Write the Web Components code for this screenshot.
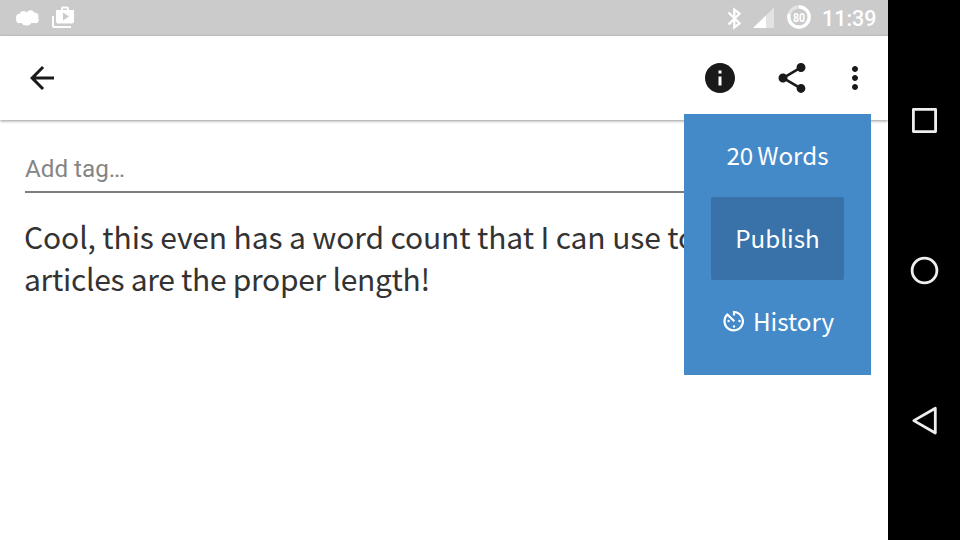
<!DOCTYPE html>
<html lang="en">
<head>
<meta charset="utf-8">
<title>Note editor</title>
<style>
html, body { margin: 0; height: 100%; overflow: hidden; background: #fff; }
</style>
</head>
<body>
<note-app></note-app>
<script>
const define = (name, html) => {
  const template = document.createElement('template');
  template.innerHTML = html;
  customElements.define(name, class extends HTMLElement {
    constructor() {
      super();
      this.attachShadow({ mode: 'open' }).append(template.content.cloneNode(true));
    }
  });
};

define('status-bar', `
<style>
:host { display: flex; align-items: center; box-sizing: border-box; height: 36px; padding: 0 13px 0 14px; background: #cbcbcb; color: #fff; }
svg { display: block; flex: none; }
.spacer { flex: 1; }
.bag { margin-left: 10px; }
.signal { margin-left: 9px; }
.battery { margin-left: 12px; }
.clock { margin-left: 11px; font: 500 21.500px/36px Roboto, sans-serif; width: 53px; white-space: nowrap; padding-top: 1px; }
</style>
<svg width="27" height="36" viewBox="0 0 27 36" fill="#fff"><circle cx="5.800" cy="17.500" r="3.800"/><circle cx="9.500" cy="14.500" r="3.600"/><circle cx="16.500" cy="14.500" r="4.200"/><circle cx="20.800" cy="16.300" r="3.600"/><circle cx="21.500" cy="20" r="3.200"/><circle cx="5.500" cy="20" r="3.200"/><ellipse cx="12.500" cy="21" rx="5.500" ry="4.600"/><path d="M6 14h14v9H6z"/></svg>
<svg class="bag" width="24" height="36" viewBox="0 0 24 36" fill="#fff"><path d="M1 16h2v10h17v2H3a2 2 0 0 1-2-2z"/><path fill-rule="evenodd" d="M5 10h5V8.500A2 2 0 0 1 12 6.500h4a2 2 0 0 1 2 2V10h5v11.500a2 2 0 0 1-2 2H7a2 2 0 0 1-2-2zM12 10h4V8.500h-4zM12 20.500l6-4-6-4z"/></svg>
<span class="spacer"></span>
<svg width="16" height="36" viewBox="0 0 16 36" fill="none" stroke="#fff" stroke-width="2.300"><path d="M1.500 12.500L12.500 23.300L7.300 27.300V9.700L12.500 13.700L1.500 24.500"/></svg>
<svg class="signal" width="23" height="36" viewBox="0 0 23 36"><path d="M22 7.500V28H1z" fill="#e3e3e3"/><path d="M14 15.500V28H1z" fill="#fff"/></svg>
<svg class="battery" width="24" height="36" viewBox="0 0 24 36"><g fill="none" stroke-width="3.200"><circle cx="12" cy="17" r="10.200" stroke="#e3e3e3"/><circle cx="12" cy="17" r="10.200" stroke="#fff" pathLength="100" stroke-dasharray="80 20" transform="rotate(-90 12 17)"/></g><text x="12" y="21.500" text-anchor="middle" textLength="12" lengthAdjust="spacingAndGlyphs" fill="#fff" font-family="Roboto, sans-serif" font-weight="700" font-size="12.500">80</text></svg>
<span class="clock">11:39</span>
`);

define('app-toolbar', `
<style>
:host { display: flex; align-items: center; box-sizing: border-box; height: 84px; padding: 0 15px 0 24px; background: #fff; box-shadow: 0 1px 3px rgba(0,0,0,.42); }
svg { display: block; width: 36px; height: 36px; fill: #1a1a1a; flex: none; }
.info { margin-left: auto; }
.share { margin-left: 36px; }
.more { margin-left: 27px; }
</style>
<svg viewBox="0 0 24 24"><path d="M20 11H7.830l5.590-5.590L12 4l-8 8 8 8 1.410-1.410L7.830 13H20v-2z"/></svg>
<svg class="info" viewBox="0 0 24 24"><path d="M12 2C6.480 2 2 6.480 2 12s4.480 10 10 10 10-4.480 10-10S17.520 2 12 2zm1 15h-2v-6h2v6zm0-8h-2V7h2v2z"/></svg>
<svg class="share" viewBox="0 0 24 24"><path d="M18 16.080c-.76 0-1.440.3-1.960.77L8.910 12.700c.05-.23.09-.46.09-.7s-.04-.47-.09-.7l7.050-4.110c.54.5 1.250.81 2.040.81 1.660 0 3-1.340 3-3s-1.340-3-3-3-3 1.340-3 3c0 .24.04.47.09.7L8.040 9.810C7.500 9.310 6.790 9 6 9c-1.660 0-3 1.340-3 3s1.340 3 3 3c.79 0 1.500-.31 2.040-.81l7.120 4.160c-.05.21-.08.43-.08.65 0 1.610 1.310 2.920 2.920 2.920s2.920-1.310 2.920-2.920-1.310-2.920-2.920-2.920z"/></svg>
<svg class="more" viewBox="0 0 24 24"><path d="M12 8c1.100 0 2-.9 2-2s-.9-2-2-2-2 .9-2 2 .9 2 2 2zm0 2c-1.100 0-2 .9-2 2s.9 2 2 2 2-.9 2-2-.9-2-2-2zm0 6c-1.100 0-2 .9-2 2s.9 2 2 2 2-.9 2-2-.9-2-2-2z"/></svg>
`);

define('tag-field', `
<style>
:host { display: block; box-sizing: border-box; height: 48px; border-bottom: 2px solid #7d7d7d; color: #858585; font: 24.200px/48px Roboto, sans-serif; }
</style>
<slot></slot>
`);

define('note-line', `
<style>
:host { display: block; white-space: nowrap; }
</style>
<slot></slot>
`);

define('note-body', `
<style>
:host { display: block; margin: 22px 0 0 -1px; color: #333; font: 30px/42px "Noto Sans CJK SC", sans-serif; }
::slotted(note-line) { letter-spacing: -.12px; }
::slotted(note-line:last-child) { letter-spacing: -.29px; }
</style>
<slot></slot>
`);

define('menu-action', `
<style>
:host { display: flex; align-items: center; justify-content: center; gap: 8px; box-sizing: border-box; height: 83px; padding-bottom: 2px; color: #fff; font: 24.200px/36px "Noto Sans CJK SC", sans-serif; word-spacing: -1.500px; white-space: nowrap; }
:host([raised]) { background: #3872a8; border-radius: 2px; }
</style>
<slot name="icon"></slot><span><slot></slot></span>
`);

define('info-menu', `
<style>
:host { display: block; box-sizing: border-box; width: 187px; height: 261px; padding: 0 27px; background: #448ac9; }
svg { display: block; }
.history { margin-right: -2px; }
</style>
<menu-action>20 Words</menu-action>
<menu-action raised>Publish</menu-action>
<menu-action class="history"><svg slot="icon" width="22" height="22" viewBox="0 0 22 22" fill="none" stroke="#fff" stroke-width="2.200"><path d="M11 5.500V2A9.200 9.200 0 1 1 4.400 4.500L11.300 11.300"/><g fill="#fff" stroke="none"><circle cx="5.600" cy="11" r="1.200"/><circle cx="16.500" cy="11" r="1.200"/><circle cx="11" cy="16.500" r="1.200"/></g></svg>History</menu-action>
`);

define('system-nav', `
<style>
:host { display: grid; grid-template-rows: repeat(3, 150px); align-content: center; justify-items: center; align-items: center; width: 72px; height: 540px; background: #000; }
svg { display: block; width: 30px; height: 30px; fill: none; stroke: #eee; stroke-width: 2.800; stroke-linejoin: round; }
</style>
<svg viewBox="0 0 30 30"><path d="M4.400 4.400h22.200v22.200H4.400z"/></svg>
<svg viewBox="0 0 30 30"><circle cx="15.500" cy="15.500" r="12.400"/></svg>
<svg viewBox="0 0 30 30"><path d="M26.300 3.200V28L4.800 15.600z"/></svg>
`);

define('note-app', `
<style>
:host { display: grid; grid-template-columns: 888px 72px; width: 960px; height: 540px; overflow: hidden; }
main { position: relative; overflow: hidden; }
.content { padding: 25px 24px 0 25px; }
info-menu { position: absolute; left: 684px; top: 114px; }
</style>
<main>
  <status-bar></status-bar>
  <app-toolbar></app-toolbar>
  <div class="content">
    <tag-field>Add tag…</tag-field>
    <note-body><note-line>Cool, this even has a word count that I can use to</note-line><note-line>articles are the proper length!</note-line></note-body>
  </div>
  <info-menu></info-menu>
</main>
<system-nav></system-nav>
`);
</script>
</body>
</html>
